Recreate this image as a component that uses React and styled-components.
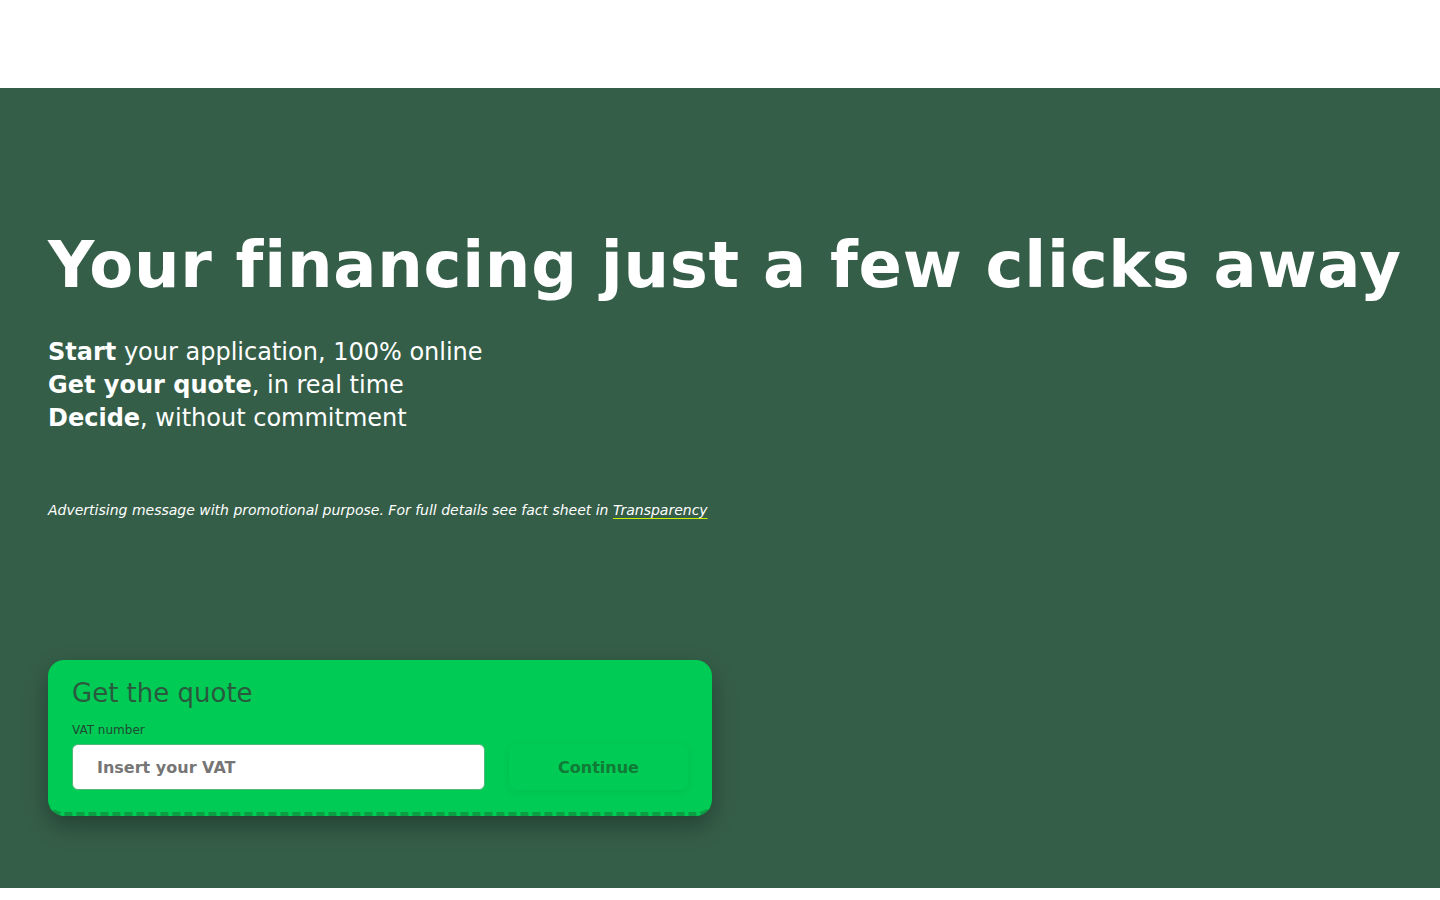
import React from 'react';
import styled, { createGlobalStyle } from 'styled-components';

const GlobalStyle = createGlobalStyle`
  body {
    margin: 0;
    font-family: 'DejaVu Sans', sans-serif;
    background: #ffffff;
  }
`;

const Header = styled.header`
  height: 88px;
  background: #ffffff;
`;

const Hero = styled.section`
  height: 800px;
  background-color: #355e48;
  color: #ffffff;
  padding: 0 48px;
  box-sizing: border-box;
  display: flex;
  flex-direction: column;
`;

const Title = styled.h1`
  margin: 139px 0 0;
  font-size: 64px;
  line-height: 76px;
  font-weight: 700;
  letter-spacing: 0.75px;
  white-space: nowrap;
`;

const Points = styled.ul`
  list-style: none;
  margin: 33px 0 0;
  padding: 0;
  font-size: 24px;
  line-height: 33px;

  strong {
    font-weight: 700;
  }
`;

const Disclaimer = styled.p`
  margin: 65px 0 0;
  font-size: 14px;
  line-height: 20px;
  font-style: italic;

  a {
    color: #ffffff;
    text-decoration: underline solid #c8f000;
    text-underline-offset: 3px;
  }
`;

const Card = styled.div`
  margin-top: 140px;
  width: 664px;
  box-sizing: border-box;
  background: #00cc55;
  border-radius: 16px;
  border-bottom: 4px dashed #0c9e44;
  padding: 16px 24px 22px;
  box-shadow: 0 10px 24px rgba(0, 0, 0, 0.3);
`;

const CardTitle = styled.h2`
  margin: 0;
  font-size: 26px;
  line-height: 34px;
  font-weight: 400;
  color: #2a5a3e;
`;

const Label = styled.label`
  display: block;
  margin-top: 13px;
  font-size: 12px;
  line-height: 14px;
  color: #1f4a32;
`;

const Row = styled.div`
  display: flex;
  align-items: center;
  margin-top: 7px;
  gap: 24px;
`;

const Input = styled.input`
  width: 413px;
  height: 46px;
  box-sizing: border-box;
  border: 1px solid #55b57a;
  border-radius: 6px;
  padding: 0 24px;
  font-family: 'DejaVu Sans', sans-serif;
  font-size: 16px;
  font-weight: 700;
  outline: none;

  &::placeholder {
    color: #757575;
  }
`;

const Button = styled.button`
  flex: 1;
  height: 46px;
  background: #00cb54;
  border: none;
  border-radius: 8px;
  box-shadow: 0 2px 8px rgba(0, 90, 30, 0.12);
  font-family: 'DejaVu Sans', sans-serif;
  font-size: 16px;
  font-weight: 700;
  color: #117a36;
  cursor: pointer;
`;

const App = () => (
  <>
    <GlobalStyle />
    <Header />
    <Hero>
      <Title>Your financing just a few clicks away</Title>
      <Points>
        <li><strong>Start</strong> your application, 100% online</li>
        <li><strong>Get your quote</strong>, in real time</li>
        <li><strong>Decide</strong>, without commitment</li>
      </Points>
      <Disclaimer>
        Advertising message with promotional purpose. For full details see fact sheet in{' '}
        <a href="#">Transparency</a>
      </Disclaimer>
      <Card>
        <CardTitle>Get the quote</CardTitle>
        <Label>VAT number</Label>
        <Row>
          <Input placeholder="Insert your VAT" />
          <Button>Continue</Button>
        </Row>
      </Card>
    </Hero>
  </>
);

export default App;
